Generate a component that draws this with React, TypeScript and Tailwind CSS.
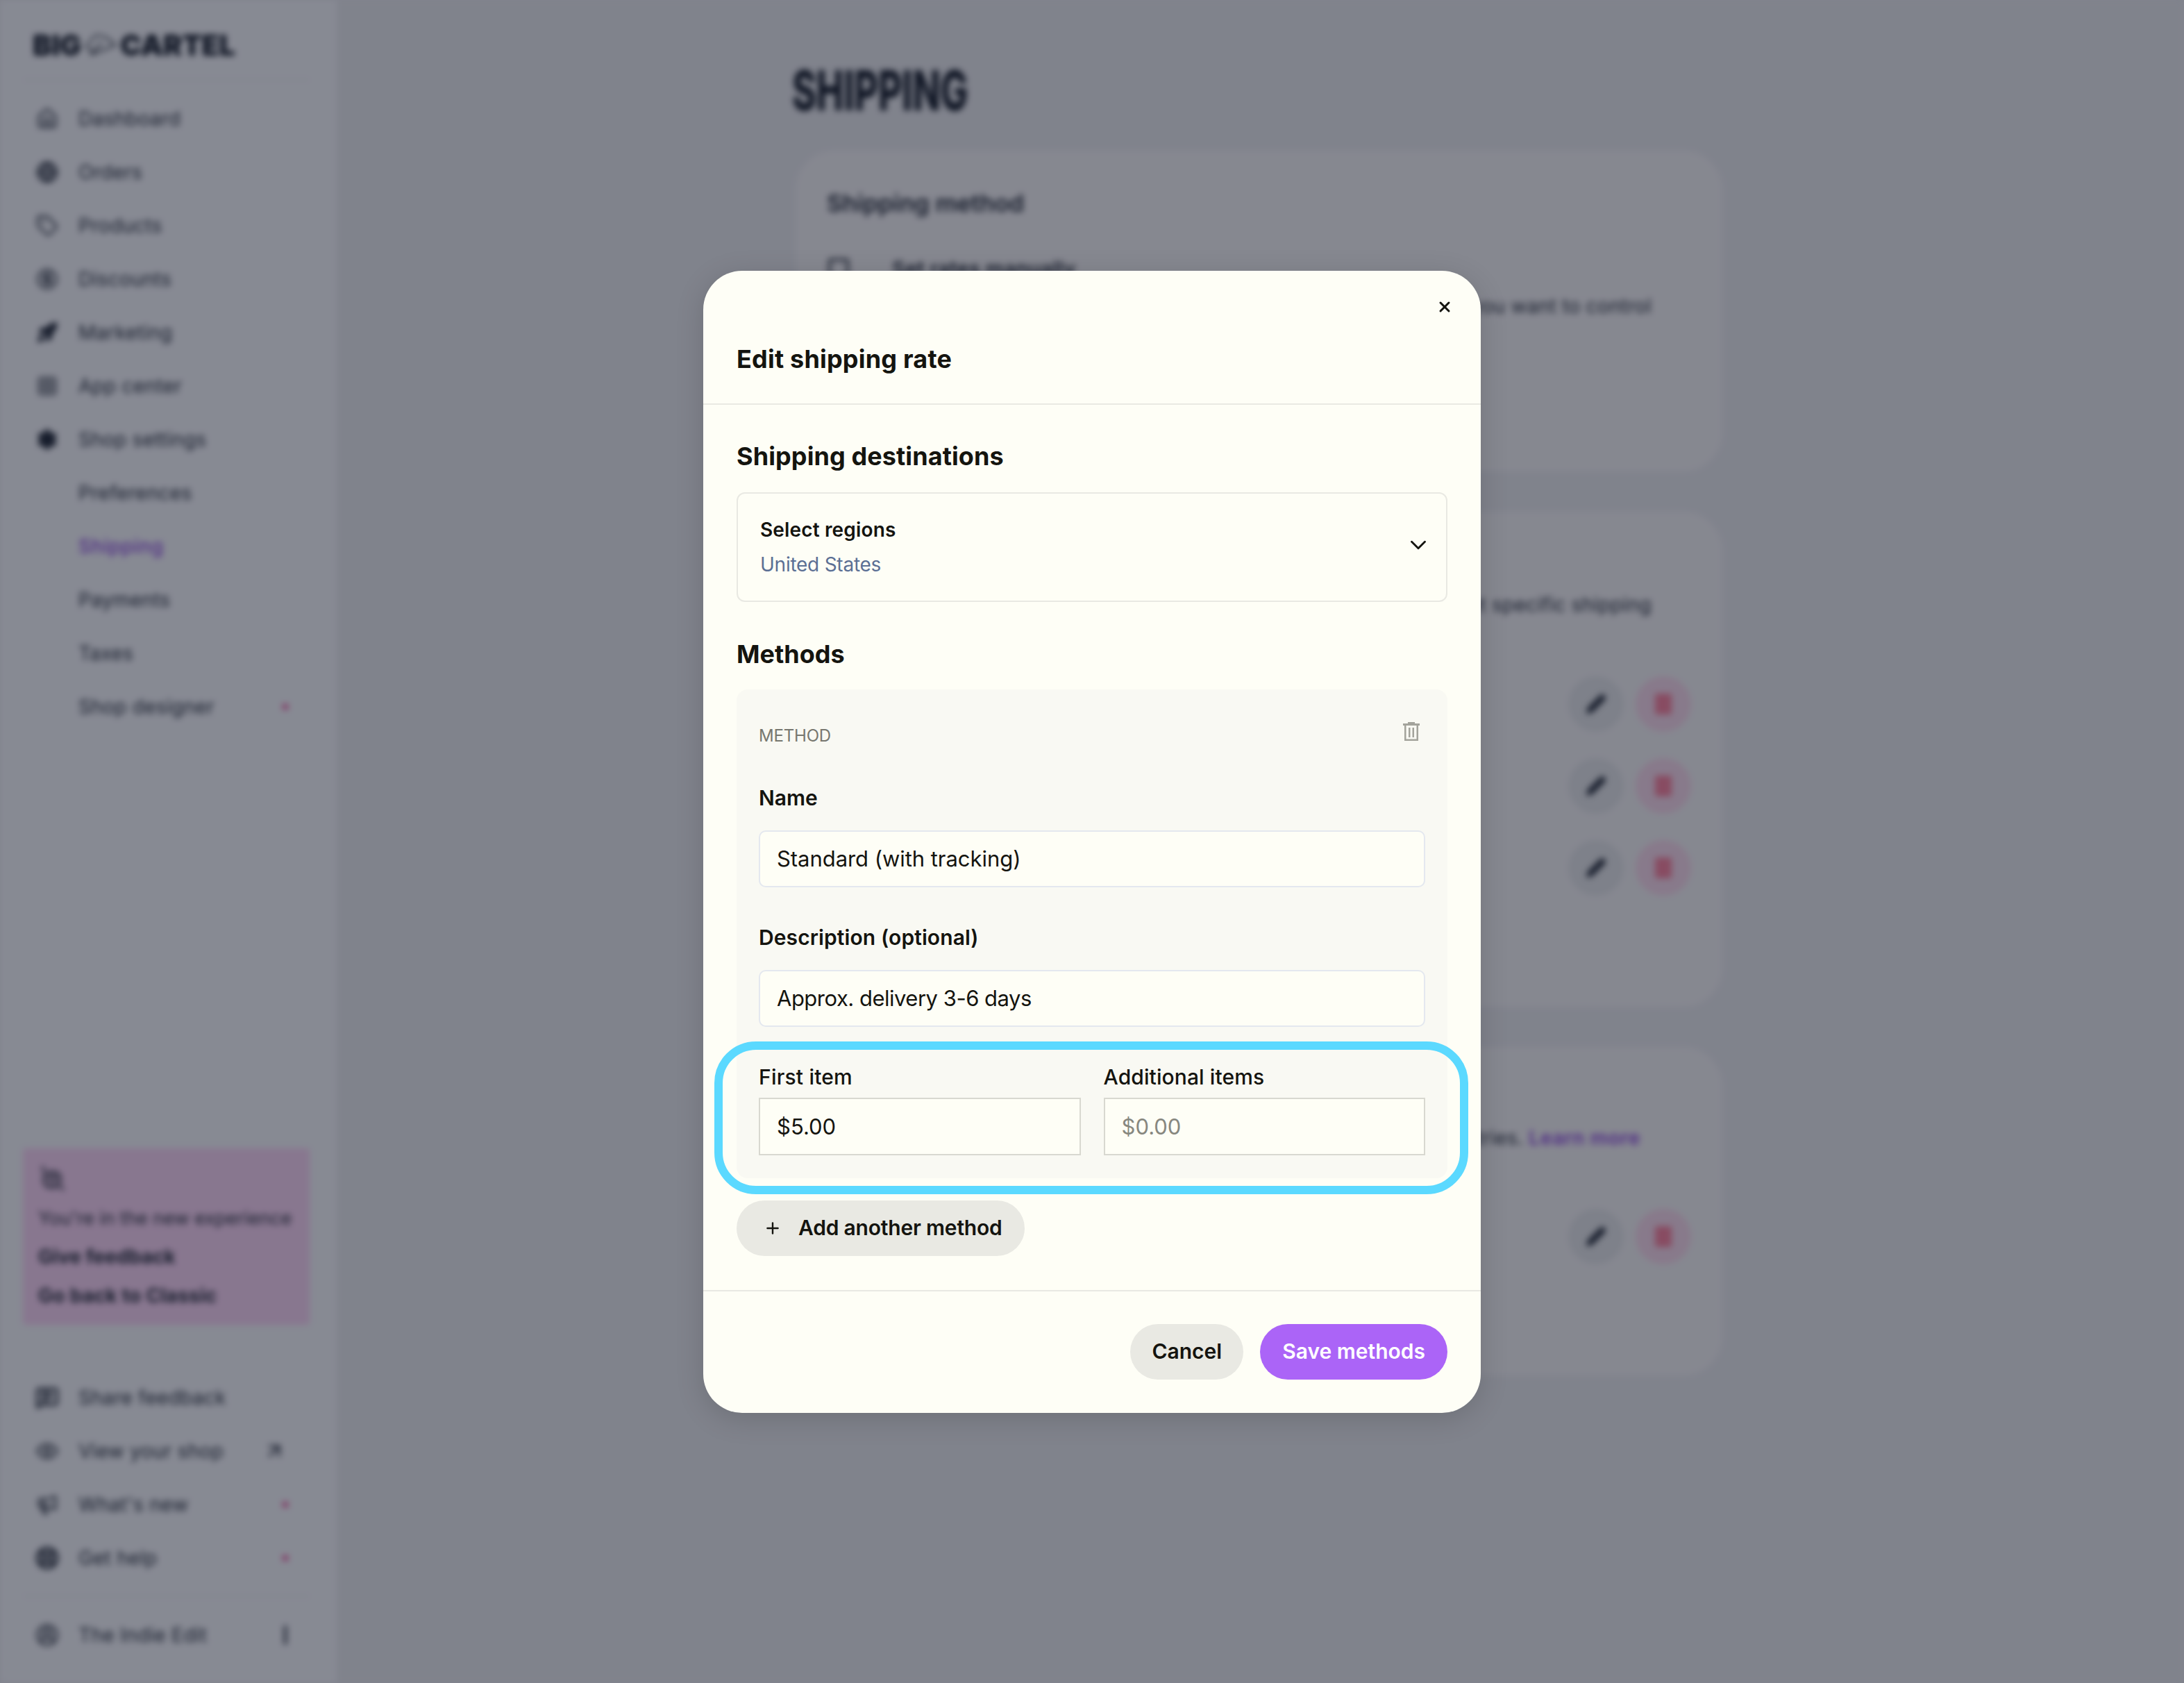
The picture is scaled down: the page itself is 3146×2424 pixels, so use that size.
import {
  ArrowUpRight,
  ChevronDown,
  CircleDollarSign,
  CircleUserRound,
  Eye,
  Globe,
  Grid3x3,
  Home,
  LifeBuoy,
  Megaphone,
  MessageSquareText,
  Pencil,
  Plus,
  Rocket,
  Settings,
  Tag,
  X,
} from 'lucide-react';

const mainNav = [
  { label: 'Dashboard', icon: Home, fill: 'none', width: 2 },
  { label: 'Orders', icon: Globe, fill: 'none', width: 2.5 },
  { label: 'Products', icon: Tag, fill: 'none', width: 2 },
  { label: 'Discounts', icon: CircleDollarSign, fill: 'none', width: 2 },
  { label: 'Marketing', icon: Rocket, fill: '#1c2230', width: 2 },
  { label: 'App center', icon: Grid3x3, fill: 'none', width: 1.5 },
  { label: 'Shop settings', icon: Settings, fill: '#1c2230', width: 2 },
];

const subNav = ['Preferences', 'Shipping', 'Payments', 'Taxes', 'Shop designer'];

function Dot() {
  return <span className="ml-auto mr-[31px] size-[8px] rounded-full bg-[#f0308a]" />;
}

function RowActions() {
  return (
    <div className="flex justify-end gap-[17px]">
      <div className="flex size-[80px] items-center justify-center rounded-full bg-[#eaeaec]">
        <Pencil size={30} fill="#1c2230" stroke="#1c2230" />
      </div>
      <div className="flex size-[80px] items-center justify-center rounded-full bg-[#ffdcee]">
        <svg width="26" height="30" viewBox="0 0 26 30">
          <rect x="1" y="0" width="24" height="30" rx="3" fill="#ff7f9c" />
        </svg>
      </div>
    </div>
  );
}

function Sidebar() {
  return (
    <aside className="flex h-full w-[485px] shrink-0 flex-col bg-[#fdfcff] pl-[33px] pr-[39px] text-[28px] tracking-[0.3px] text-[#1c2230]">
      <div className="flex h-[116px] shrink-0 items-center border-b-2 border-[#f0eff2] pl-[14px] pt-[16px] font-black leading-none tracking-normal text-[#0d1320]">
        <span className="text-[41px]">BIG</span>
        <svg width="46" height="36" viewBox="0 0 46 36" className="mx-[5px]" fill="none" stroke="#0d1320" strokeWidth="2">
          <path d="M2 20 L14 5 Q28 0 44 18 L14 30 Z" />
          <path d="M8 33 L24 14" />
        </svg>
        <span className="text-[41px]">CARTEL</span>
      </div>

      <nav className="mt-[16px] flex flex-col">
        {mainNav.map((item) => (
          <div key={item.label} className="flex h-[77px] items-center">
            <item.icon size={32} fill={item.fill} strokeWidth={item.width} className="ml-[19px] mr-[29px]" />
            {item.label}
          </div>
        ))}
        {subNav.map((label) => (
          <div key={label} className={`flex h-[77px] items-center pl-[80px] ${label === 'Shipping' ? 'font-medium tracking-[0.6px] text-[#8b3fe0]' : ''}`}>
            {label}
            {label === 'Shop designer' && <Dot />}
          </div>
        ))}
      </nav>

      <div className="mt-auto flex flex-col">
        <div className="mb-[66px] flex h-[254px] flex-col rounded-[4px] bg-[#ffd6f7] px-[22px] pt-[24px]">
          <svg width="36" height="38" viewBox="0 0 36 38" fill="none" stroke="#1c2230" strokeWidth="3" className="ml-[3px]">
            <path d="M4 1 V10" />
            <rect x="5" y="10" width="24" height="22" rx="9" />
            <path d="M8 19 H26 M14 11 V30 M21 11 V30" strokeWidth="2" />
            <path d="M29 31 L34 36" />
          </svg>
          <p className="mt-[20px] whitespace-nowrap text-[26.6px] leading-[36px] tracking-normal">You're in the new experience</p>
          <p className="mt-[20px] text-[28px] font-bold leading-[36px] tracking-[0.1px]">Give feedback</p>
          <p className="mt-[20px] text-[28px] font-bold leading-[36px] tracking-[0.3px]">Go back to Classic</p>
        </div>

        <div className="flex h-[77px] items-center">
          <MessageSquareText size={34} strokeWidth={2.5} className="ml-[18px] mr-[28px]" />
          Share feedback
        </div>
        <div className="flex h-[77px] items-center">
          <Eye size={34} className="ml-[18px] mr-[28px]" />
          View your shop
          <ArrowUpRight size={34} className="ml-auto mr-[34px]" />
        </div>
        <div className="flex h-[77px] items-center">
          <Megaphone size={32} className="ml-[19px] mr-[29px]" />
          What's new
          <Dot />
        </div>
        <div className="flex h-[77px] items-center">
          <LifeBuoy size={34} strokeWidth={3} className="ml-[18px] mr-[28px]" />
          Get help
          <Dot />
        </div>

        <div className="mb-[31px] mt-[16px] border-t-2 border-[#f0eff2] pt-[16px]">
          <div className="flex h-[77px] items-center">
            <CircleUserRound size={34} className="ml-[18px] mr-[28px]" />
            The Indie Edit
            <span className="ml-auto mr-[33px] h-[28px] w-[4px] rounded-full bg-[#1c2230]" />
          </div>
        </div>
      </div>
    </aside>
  );
}

function ShippingPage() {
  return (
    <main className="h-full flex-1 bg-[#efeef1] pl-[656px] text-[28px] tracking-[0.3px] text-[#1c2230]">
      <h1 className="inline-block origin-left scale-x-[0.66] pt-[90px] text-[80px] font-extrabold leading-[80px] tracking-normal text-[#0d1320]">
        SHIPPING
      </h1>

      <div className="ml-[5px] mt-[47px] flex w-[1335px] flex-col gap-[58px]">
        <section className="h-[462px] rounded-[56px] bg-[#fbf8f9] px-[45px] pt-[51px]">
          <h2 className="text-[34.6px] font-semibold leading-[48px] tracking-normal">Shipping method</h2>
          <div className="mt-[53px] flex h-[36px] items-center text-[29px] font-semibold">
            <span className="ml-[2px] mr-[62px] size-[30px] rounded-[4px] border-[4px] border-[#3a3f4b]" />
            Set rates manually
          </div>
          <p className="mt-[18px] pr-[57px] text-right leading-[36px]">you want to control</p>
        </section>

        <section className="h-[713px] rounded-[56px] bg-[#fbf8f9] px-[45px] pt-[116px]">
          <p className="pr-[57px] text-right leading-[36px]">to set specific shipping</p>
          <div className="mt-[85px] flex flex-col gap-[38px]">
            <RowActions />
            <RowActions />
            <RowActions />
          </div>
        </section>

        <section className="h-[473px] rounded-[56px] bg-[#fbf8f9] px-[45px] pt-[113px]">
          <p className="pr-[73px] text-right leading-[36px]">
            countries. <span className="font-semibold tracking-[0.7px] text-[#8b3fe0]">Learn more</span>
          </p>
          <div className="mt-[84px]">
            <RowActions />
          </div>
        </section>
      </div>
    </main>
  );
}

function Modal() {
  return (
    <div className="relative w-[1120px] rounded-[56px] bg-[#fefef6] text-[#14140f] shadow-[0_8px_40px_rgba(0,0,0,0.15)]">
      {/* Header */}
      <div className="h-[193px] border-b-2 border-[#e9e9e3] pl-[48px] pt-[40px]">
        <div className="flex justify-end pr-[40px]">
          <X size={24} strokeWidth={3} />
        </div>
        <h2 className="mt-[39px] text-[36px] font-bold leading-[48px] tracking-[0.2px]">Edit shipping rate</h2>
      </div>

      {/* Body */}
      <div className="border-b-2 border-[#e9e9e3] px-[48px] pb-[49px] pt-[50px]">
        <h3 className="text-[36px] font-bold leading-[48px] tracking-[0.1px]">Shipping destinations</h3>
        <div className="mt-[28px] flex h-[158px] items-center justify-between rounded-[12px] border-2 border-[#e9e9e3] pl-[32px] pr-[21px]">
          <div className="flex flex-col gap-[14px] text-[28px] leading-[36px]">
            <span className="font-semibold tracking-[0.15px]">Select regions</span>
            <span className="tracking-[-0.25px] text-[#5b6f94]">United States</span>
          </div>
          <ChevronDown size={38} strokeWidth={1.8} className="mt-[-6px]" />
        </div>

        <h3 className="mt-[51px] text-[36px] font-bold leading-[48px]">Methods</h3>
        <div className="mt-[27px] rounded-[16px] bg-[#f9f9f3] px-[32px] pb-[33px] pt-[46px]">
          <div className="flex items-start justify-between pr-[8px]">
            <span className="mt-[5px] text-[24px] uppercase leading-[32px] tracking-[-0.2px] text-[#77776f]">Method</span>
            <svg width="24" height="27" viewBox="0 0 24 27" fill="#a3a39b" className="mt-[1px]">
              <rect x="7" y="0" width="10" height="2.5" />
              <rect x="0" y="2" width="24" height="3" />
              <path d="M2 5 H22 V27 H2 Z M4.5 5 V24.5 H19.5 V5 Z" fillRule="evenodd" />
              <rect x="8" y="8" width="2.5" height="14" />
              <rect x="13.5" y="8" width="2.5" height="14" />
            </svg>
          </div>

          <label className="mt-[55px] block text-[30px] font-semibold leading-[36px]">Name</label>
          <input
            readOnly
            value="Standard (with tracking)"
            className="mt-[29px] h-[82px] w-full rounded-[10px] border-2 border-[#e4e8ef] bg-[#fefef6] px-[24px] text-[31px] tracking-[-0.05px] outline-none"
          />

          <label className="mt-[54px] block text-[30px] font-semibold leading-[36px] tracking-[0.1px]">Description (optional)</label>
          <input
            readOnly
            value="Approx. delivery 3-6 days"
            className="mt-[29px] h-[82px] w-full rounded-[10px] border-2 border-[#e4e8ef] bg-[#fefef6] px-[24px] text-[31px] tracking-[-0.5px] outline-none"
          />

          <div className="mt-[54px] grid grid-cols-2 gap-[33px]">
            <div>
              <label className="block text-[30px] font-medium leading-[36px] tracking-[0.2px]">First item</label>
              <input
                readOnly
                value="$5.00"
                className="mt-[12px] h-[83px] w-full border-2 border-[#d8d8d0] bg-[#fefef6] px-[24px] text-[31px] outline-none"
              />
            </div>
            <div>
              <label className="block text-[30px] font-medium leading-[36px] tracking-[0.1px]">Additional items</label>
              <input
                readOnly
                placeholder="$0.00"
                className="mt-[12px] h-[83px] w-full border-2 border-[#d8d8d0] bg-[#fefef6] px-[24px] text-[31px] outline-none placeholder:text-[#87877f]"
              />
            </div>
          </div>
        </div>

        <button className="mt-[32px] flex h-[80px] items-center gap-[24px] rounded-full bg-[#e9e9e3] pl-[39px] pr-[32px] text-[30px] font-semibold tracking-[-0.2px]">
          <Plus size={26} strokeWidth={2.2} />
          Add another method
        </button>
      </div>

      {/* Footer */}
      <div className="flex justify-end gap-[24px] px-[48px] pb-[48px] pt-[47px] text-[30px] font-semibold">
        <button className="h-[80px] rounded-full bg-[#e9e9e3] px-[31px]">Cancel</button>
        <button className="h-[80px] rounded-full bg-[#ab64f7] px-[32px] text-white">Save methods</button>
      </div>

      {/* highlight ring drawn over the price fields */}
      <div className="pointer-events-none absolute left-[16px] right-[18px] top-[1110px] h-[220px] rounded-[60px] border-[12px] border-[#5bd9ff]" />
    </div>
  );
}

export default function App() {
  return (
    <div className="relative h-screen w-full overflow-hidden bg-[#efeef1] font-['Inter',sans-serif]">
      <div className="flex h-full blur-[5px]">
        <Sidebar />
        <ShippingPage />
      </div>
      <div className="absolute inset-0 flex items-center justify-center bg-[#111827]/50">
        <Modal />
      </div>
    </div>
  );
}
